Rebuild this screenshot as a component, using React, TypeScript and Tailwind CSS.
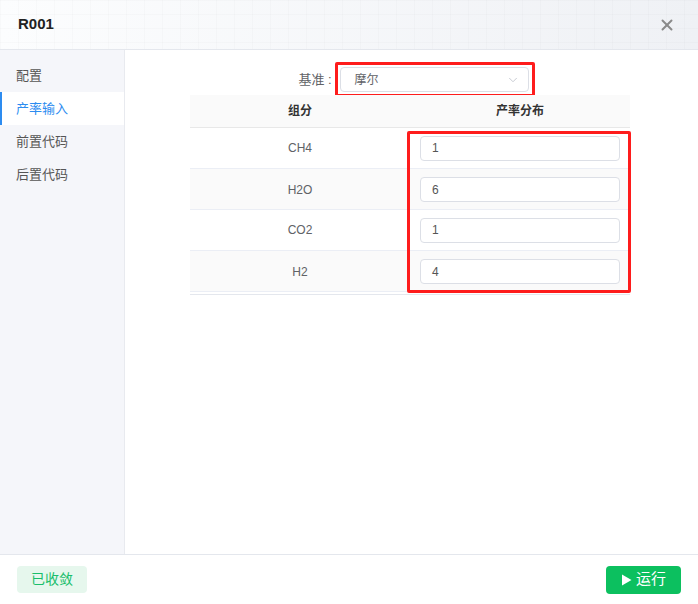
import { ChevronDown, X } from 'lucide-react';

const menu = ['配置', '产率输入', '前置代码', '后置代码'];
const rows = [
  { name: 'CH4', value: '1' },
  { name: 'H2O', value: '6' },
  { name: 'CO2', value: '1' },
  { name: 'H2', value: '4' },
];

export default function App() {
  return (
    <div className="w-[698px] h-[604px] flex flex-col bg-white text-[#333] font-['Liberation_Sans','Noto_Sans_CJK_SC',sans-serif]">
      <header className="relative h-[50px] shrink-0 border-b border-[#e4e7ed] flex items-center justify-between pl-[18px] pr-[22px] bg-[linear-gradient(90deg,#fcfdfe,#eff1f5)]">
        <div className="absolute inset-0 bg-[linear-gradient(rgba(0,0,0,0.015)_1px,transparent_1px),linear-gradient(90deg,rgba(0,0,0,0.015)_1px,transparent_1px)] bg-[size:18px_14px] pointer-events-none" />
        <span className="relative text-[15px] font-bold text-[#222]">R001</span>
        <X className="relative w-[18px] h-[18px] text-[#8a8a8a]" strokeWidth={2.6} />
      </header>

      <div className="flex-1 flex min-h-0">
        <aside className="w-[125px] shrink-0 bg-[#f5f6fa] border-r border-[#e8eaef] pt-[9px]">
          {menu.map((m, i) => (
            <div
              key={m}
              className={
                i === 1
                  ? 'h-[33px] flex items-center pl-[14px] text-[13px] bg-white text-[#2d8cf0] border-l-2 border-[#2d8cf0]'
                  : 'h-[33px] flex items-center pl-[16px] text-[13px] text-[#555]'
              }
            >
              {m}
            </div>
          ))}
        </aside>

        <main className="flex-1 pt-[17px]">
          <div className="flex justify-center items-center pl-[4px]">
            <span className="text-[13px] text-[#606266] mr-[8px]">基准 :</span>
            <div className="relative">
              <div className="w-[189px] h-[25px] border border-[#dcdfe6] rounded-[4px] flex items-center justify-between pl-[14px] pr-[8px]">
                <span className="text-[12px] text-[#606266]">摩尔</span>
                <ChevronDown className="w-[14px] h-[14px] text-[#c0c4cc]" strokeWidth={1.5} />
              </div>
              <div className="absolute -left-[5px] -right-[6px] -top-[5px] -bottom-[5px] border-[3px] border-[#fe1c1c] rounded-[2px]" />
            </div>
          </div>

          <div className="relative w-[440px] mx-auto mt-[3px] mr-[68px]">
            <div className="flex h-[33px] bg-[#fafafa] border-b border-[#e8e8e8] text-[12px] font-bold text-[#333]">
              <div className="flex-1 flex items-center justify-center">组分</div>
              <div className="flex-1 flex items-center justify-center">产率分布</div>
            </div>
            {rows.map((r, i) => (
              <div
                key={r.name}
                className={
                  i % 2 === 1
                    ? 'flex h-[41px] bg-[#fafafa] border-b border-[#ebeef5] pt-[1px]'
                    : 'flex h-[41px] bg-white border-b border-[#ebeef5]'
                }
              >
                <div className="flex-1 flex items-center justify-center text-[12px] text-[#606266]">{r.name}</div>
                <div className="flex-1 flex items-center justify-center">
                  <div className="w-[200px] h-[25px] bg-white border border-[#dcdfe6] rounded-[4px] flex items-center pl-[11px] text-[12px] text-[#555]">
                    {r.value}
                  </div>
                </div>
              </div>
            ))}
            <div className="h-[3px] border-b border-[#e4e7ed]" />
            <div className="absolute left-[217px] top-[36px] w-[224px] h-[162px] border-[3px] border-[#fe1c1c] rounded-[2px]" />
          </div>
        </main>
      </div>

      <footer className="h-[50px] shrink-0 border-t border-[#e4e7ed] flex items-center justify-between pl-[17px] pr-[17px]">
        <div className="w-[70px] h-[27px] rounded-[4px] bg-[#e6f7ed] text-[#19be6b] text-[14px] flex items-center justify-center">
          已收敛
        </div>
        <div className="w-[75px] h-[28px] rounded-[4px] bg-[#0cc05f] text-white text-[15px] flex items-center justify-center gap-[4px]">
          <svg width="11" height="12" viewBox="0 0 11 12">
            <path d="M1 0.5 L10.5 6 L1 11.5 Z" fill="white" />
          </svg>
          运行
        </div>
      </footer>
    </div>
  );
}
